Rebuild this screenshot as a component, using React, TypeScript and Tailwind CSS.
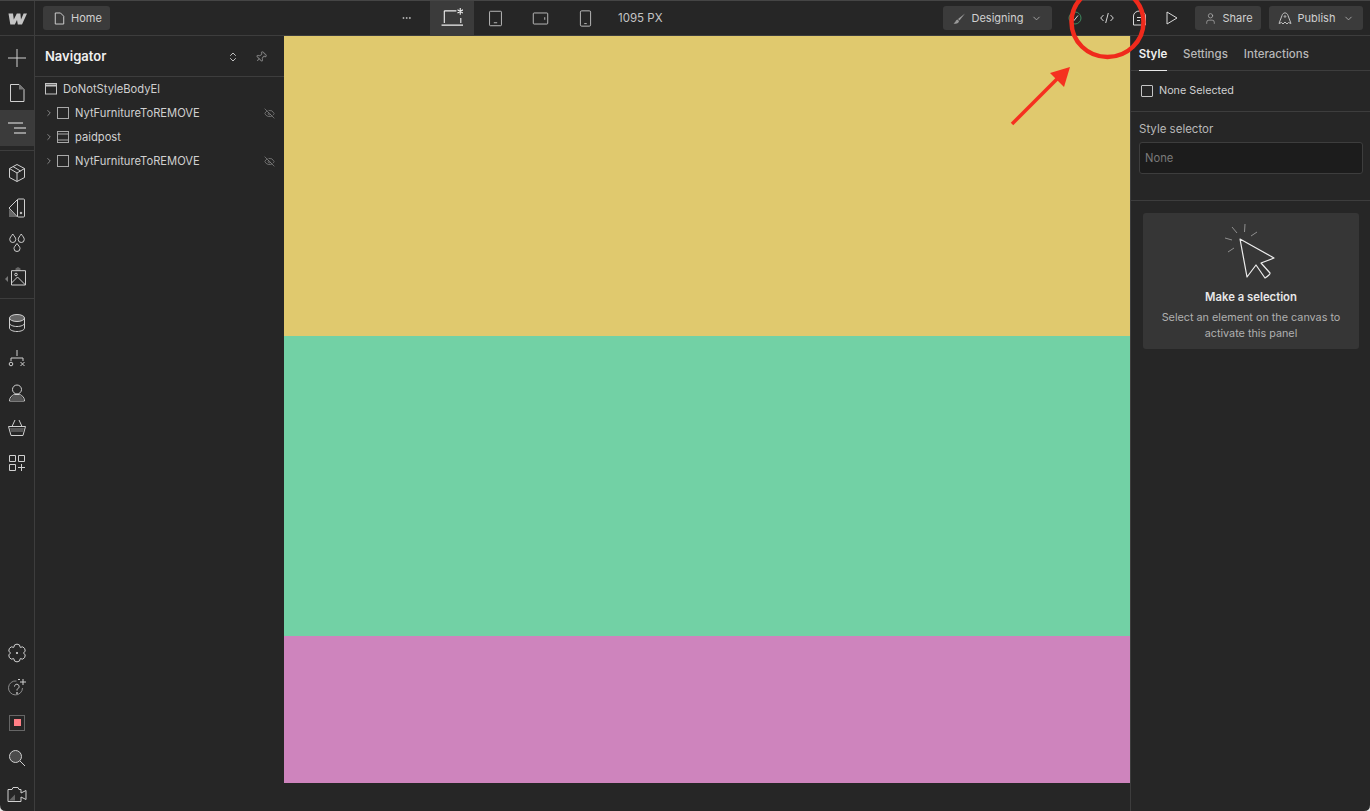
import { ChevronDown, ChevronRight, ChevronsUpDown, Ellipsis, EyeOff, Pin, User } from 'lucide-react'

const stroke = '#d0d0d0'

function Ico({ children, size = 20, className = '' }: { children: React.ReactNode; size?: number; className?: string }) {
  return (
    <svg width={size} height={size} viewBox="0 0 20 20" fill="none" stroke={stroke} strokeWidth={1} strokeLinejoin="round" className={className}>
      {children}
    </svg>
  )
}

function RailBtn({ children, active, h = 35 }: { children: React.ReactNode; active?: boolean; h?: number }) {
  return (
    <div className={`flex w-full items-center justify-center ${active ? 'bg-[#3b3b3b]' : ''}`} style={{ height: h }}>
      {children}
    </div>
  )
}

function Rail() {
  return (
    <div className="flex w-[35px] shrink-0 flex-col border-r border-[#3d3d3d] bg-[#262626]">
      <div className="pt-1">
        <RailBtn h={35}>
          <Ico><path d="M10 1v18M1 10h18" /></Ico>
        </RailBtn>
        <RailBtn h={35}>
          <Ico><path d="M3.500 1.500h8.500l5 5v12h-13.500z" /><path d="M12 1.500l5 5h-5z" fill="#777" stroke="none" /></Ico>
        </RailBtn>
        <RailBtn active h={36}>
          <Ico><path d="M1 5h15M7 10h12M7 15h12" stroke="#f0f0f0" /></Ico>
        </RailBtn>
      </div>
      <div className="mt-1 border-t border-[#3d3d3d] pt-1">
        <RailBtn>
          <Ico><path d="M10 1.500l7.500 4v9l-7.500 4-7.500-4v-9z" /><path d="M2.500 5.500L10 10l7.500-4.500M10 10v8.500M6 3.500l7.500 4.500" /></Ico>
        </RailBtn>
        <RailBtn>
          <Ico><rect x="10.500" y="1" width="7" height="18" rx="1" /><path d="M2 11v8h8z" fill="#666" stroke="none" /><path d="M2 10L10.500 1.500M2 10l8.500 9" /><circle cx="14" cy="15" r="0.800" fill={stroke} /></Ico>
        </RailBtn>
        <RailBtn>
          <Ico><path d="M5.750 1c-1.500 2.500-3 3.500-3 5.500a3 3 0 0 0 6 0c0-2-1.500-3-3-5.500zM14.250 1c-1.500 2.500-3 3.500-3 5.500a3 3 0 0 0 6 0c0-2-1.500-3-3-5.500zM10 10.500c-1.500 2.300-3 3.200-3 5a3 3 0 0 0 6 0c0-1.800-1.500-2.700-3-5z" /></Ico>
        </RailBtn>
        <RailBtn h={34}>
          <div className="relative h-5 w-5">
            <span className="absolute left-[-2px] top-[9px] h-0 w-0 border-y-[3px] border-r-[3px] border-y-transparent border-r-[#777]" />
            <Ico><path d="M8.500 1.500l2.500-1.500 2.500 1.500v2h-5z" fill="#666" stroke="none" /><rect x="4.500" y="3.700" width="14" height="14.300" /><path d="M4.500 16l6-6 8 8" /><circle cx="9" cy="7.500" r="1.300" /></Ico>
          </div>
        </RailBtn>
      </div>
      <div className="mt-1 border-t border-[#3d3d3d] pt-[6px]">
        <RailBtn>
          <Ico><ellipse cx="10" cy="5" rx="7.500" ry="3.500" fill="#666" /><path d="M2.500 5v10c0 2 3.500 3.500 7.500 3.500s7.500-1.500 7.500-3.500V5M2.500 10c0 2 3.500 3.500 7.500 3.500s7.500-1.500 7.500-3.500" /></Ico>
        </RailBtn>
        <RailBtn>
          <Ico><path d="M10 2v6M4 13v-3h12v3" /><circle cx="4" cy="16" r="1.800" /><path d="M13.500 14l4 4M17.500 14l-4 4" /></Ico>
        </RailBtn>
        <RailBtn>
          <Ico><circle cx="10" cy="6.500" r="4.500" /><path d="M2.500 18c0-4 3-6 5-6.500h5c2 .5 5 2.500 5 6.500z" /><path d="M6 12l-3 6h14l-3-6z" fill="#555" stroke="none" /></Ico>
        </RailBtn>
        <RailBtn>
          <Ico><path d="M1.500 8.500h17l-2.500 9H4z" /><path d="M5 8.500L8 2M15 8.500L12 2" /><path d="M3 10h14l-1 4H4z" fill="#555" stroke="none" /></Ico>
        </RailBtn>
        <RailBtn>
          <Ico><rect x="2.500" y="2.500" width="6" height="6" /><rect x="11.500" y="2.500" width="6" height="6" /><rect x="2.500" y="11.500" width="6" height="6" /><path d="M14.500 11v7M11 14.500h7" /></Ico>
        </RailBtn>
      </div>
      <div className="mt-auto flex flex-col">
        <RailBtn>
          <Ico><path d="M6.750 4.370A3.250 3.250 0 0 1 13.250 4.370A3.250 3.250 0 0 1 16.500 10A3.250 3.250 0 0 1 13.250 15.630A3.250 3.250 0 0 1 6.750 15.630A3.250 3.250 0 0 1 3.500 10A3.250 3.250 0 0 1 6.750 4.370z" /><circle cx="10" cy="10" r="0.700" fill={stroke} /></Ico>
        </RailBtn>
        <RailBtn>
          <Ico><path d="M15.500 10a7 7 0 1 1-6-7" stroke="#8a8a8a" /><path d="M16 1v6M13 4h6M11 1.500h2" /><path d="M7.500 8.500a2.300 2.300 0 1 1 3.500 2c-.8.500-1 1-1 2" /><circle cx="10" cy="15" r="0.500" fill={stroke} /></Ico>
        </RailBtn>
        <RailBtn>
          <div className="flex h-[16px] w-[16px] items-center justify-center border border-[#666]">
            <div className="h-[7px] w-[7px] bg-[#ff7f86]" />
          </div>
        </RailBtn>
        <RailBtn>
          <Ico><circle cx="8.500" cy="8.500" r="6" fill="#4b4b4b" /><path d="M13 13l5 5" /></Ico>
        </RailBtn>
        <div className="mt-[3px]">
          <RailBtn h={33}>
            <Ico><path d="M1 4.500h4l1-2h5l1 2h2v3.500l5-2.500v9l-5-2.500v4.500H1z" /><path d="M2 15.500l6-6v6z" fill="#666" stroke="none" /></Ico>
          </RailBtn>
        </div>
      </div>
    </div>
  )
}

function TreeRow({ label, icon, hidden }: { label: string; icon: 'box' | 'section'; hidden?: boolean }) {
  return (
    <div className="flex h-6 items-center pl-[9px] pr-[9px]">
      <ChevronRight size={10} strokeWidth={1.500} className="text-[#bbb]" />
      <span className="ml-[2px] flex h-[14px] w-[14px] items-center justify-center">
        {icon === 'box' ? (
          <span className="h-[12px] w-[12px] border border-[#a8a8a8]" />
        ) : (
          <svg width="12" height="12" viewBox="0 0 12 12" fill="none" stroke="#a8a8a8"><rect x="0.500" y="0.500" width="11" height="11" /><path d="M0.500 3h11M0.500 9h11" /></svg>
        )}
      </span>
      <span className="ml-[5px] text-[11.200px] text-[#d0d0d0]">{label}</span>
      {hidden && <EyeOff size={11} strokeWidth={1.300} className="ml-auto text-[#9a9a9a]" />}
    </div>
  )
}

function Navigator() {
  return (
    <div className="flex w-[249px] shrink-0 flex-col bg-[#262626]">
      <div className="flex h-[41px] items-center border-b border-[#3d3d3d] pl-[10px] pr-[17px] pt-[2px]">
        <span className="text-[13px] font-semibold text-[#f0f0f0]">Navigator</span>
        <ChevronsUpDown size={12} className="ml-auto text-[#c0c0c0]" />
        <Pin size={12} className="ml-[16px] rotate-45 text-[#7a7a7a]" />
      </div>
      <div className="flex h-6 items-center pl-[10px]">
        <svg width="13" height="12" viewBox="0 0 13 12" fill="none" stroke="#c4c4c4"><rect x="0.500" y="0.500" width="11" height="10.500" /><path d="M0.500 2.500h11" strokeWidth="2" /></svg>
        <span className="ml-[5px] text-[11.200px] text-[#d0d0d0]">DoNotStyleBodyEl</span>
      </div>
      <TreeRow label="NytFurnitureToREMOVE" icon="box" hidden />
      <TreeRow label="paidpost" icon="section" />
      <TreeRow label="NytFurnitureToREMOVE" icon="box" hidden />
    </div>
  )
}

function TopBar() {
  return (
    <div className="flex h-[36px] shrink-0 items-center border-b border-t border-b-[#3d3d3d] border-t-[#454545] bg-[#262626] text-[11px] text-[#d0d0d0]">
      <div className="flex h-full w-[35px] shrink-0 items-center justify-center border-r border-[#3d3d3d]">
        <svg width="20" height="13" viewBox="0 0 20 13" fill="#c4c4c4">
          <path d="M1.500 1.500h4.500l.8 6 3-6h3.600l.6 6 2.600-6H20l-5 11h-4.200l-.8-4.500L7.800 12.500H3.300z" />
        </svg>
      </div>
      <div className="ml-2 flex h-[24px] w-[67px] items-center rounded-[3px] bg-[#3b3b3b] pl-[10px]">
        <Ico size={13}><path d="M3.500 1.500h8l5 5v12h-13z" strokeWidth={1.500} /></Ico>
        <span className="ml-[5px]">Home</span>
      </div>
      <div className="ml-[291px] flex h-[34px] w-[11px] items-center justify-center">
        <Ellipsis size={12} className="text-[#c4c4c4]" />
      </div>
      <div className="ml-[18px] flex h-[34px] w-[44px] items-center justify-center bg-[#3b3b3b]">
        <Ico size={22}><path d="M3 3.500h11M3 3.500v11M18 10v4.500M0.500 16.500h21" stroke="#f0f0f0" /><path d="M17.500 1v6M15 2.500l5 3M20 2.500l-5 3" stroke="#f0f0f0" /></Ico>
      </div>
      <div className="flex h-[34px] w-[42px] items-center justify-center">
        <Ico size={17}><rect x="3" y="1.500" width="14" height="17" rx="1" /><path d="M8 15h4" /></Ico>
      </div>
      <div className="ml-[2px] flex h-[34px] w-[44px] items-center justify-center">
        <Ico size={17}><rect x="1.500" y="3.500" width="17" height="13" rx="1" /><path d="M15 8.500v3" /></Ico>
      </div>
      <div className="ml-[1px] flex h-[34px] w-[44px] items-center justify-center">
        <Ico size={17}><rect x="4" y="1" width="12" height="18" rx="1.500" /><path d="M8.500 16h3" /></Ico>
      </div>
      <span className="ml-[11px] pt-[1px] text-[11.500px] text-[#c4c4c4]">1095 PX</span>
      <div className="ml-[281px] flex h-[24px] w-[109px] items-center rounded-[3px] bg-[#3b3b3b] pl-[10px]">
        <svg width="13" height="13" viewBox="0 0 13 13" fill="#999"><path d="M12 1.500L5 7 6.500 8.500zM4.500 7.500C2.500 8 3 10 .5 11.500c3 1 5.500-.5 5.500-2.500z" /></svg>
        <span className="ml-[5px]">Designing</span>
        <ChevronDown size={11} className="ml-[8px] text-[#aaa]" />
      </div>
      <div className="ml-[15px] flex w-[15px] items-center justify-center">
        <svg width="14" height="14" viewBox="0 0 14 14" fill="none"><circle cx="7" cy="7" r="6" stroke="#3d8a5f" /><path d="M4 7.500l2 2 4-5" stroke="#d8d8d8" /></svg>
      </div>
      <div className="ml-[17px] flex w-[16px] items-center justify-center">
        <svg width="14" height="12" viewBox="0 0 14 12" fill="none" stroke="#d8d8d8"><path d="M3.500 3L.7 6l2.800 3M10.500 3l2.800 3-2.800 3M8.300 1L5.700 11" /></svg>
      </div>
      <div className="ml-[17px] flex w-[15px] items-center justify-center">
        <svg width="15" height="16" viewBox="0 0 15 16" fill="none" stroke="#d8d8d8"><path d="M1.500 15V6a6 5 0 0 1 12 0v9zM5 7.500h5M5 10.500h3" /></svg>
      </div>
      <div className="ml-[18px] flex w-[14px] items-center justify-center">
        <svg width="12" height="14" viewBox="0 0 12 14" fill="none" stroke="#d8d8d8"><path d="M1 1l10 6-10 6z" /></svg>
      </div>
      <div className="ml-[16px] flex h-[24px] w-[66px] items-center rounded-[3px] bg-[#3b3b3b] pl-[9px]">
        <User size={13} strokeWidth={1.200} className="text-[#c0c0c0]" />
        <span className="ml-[5px]">Share</span>
      </div>
      <div className="ml-[8px] flex h-[24px] w-[94px] items-center rounded-[3px] bg-[#3b3b3b] pl-[9px]">
        <svg width="14" height="14" viewBox="0 0 14 14" fill="none" stroke="#c0c0c0"><path d="M1 12.500L4 4.500c1-3.500 5-3.500 6 0l3 8-2.500-1-1.500 1.500L7 11l-2 2-1.500-1.500z" /><circle cx="7" cy="5.500" r="0.800" /></svg>
        <span className="ml-[5px]">Publish</span>
        <ChevronDown size={11} className="ml-[8px] text-[#aaa]" />
      </div>
    </div>
  )
}

function StylePanel() {
  return (
    <div className="flex w-[240px] shrink-0 flex-col border-l border-[#3d3d3d] bg-[#262626]">
      <div className="flex h-[35px] border-b border-[#3d3d3d] pl-[8px] text-[11.500px] font-medium text-[#b8b8b8]">
        <div className="flex h-[35px] w-[28px] items-center justify-center border-b border-[#e8e8e8] pt-[4px] font-semibold text-[#f0f0f0]">Style</div>
        <div className="ml-[16px] flex items-center pt-[4px]">Settings</div>
        <div className="ml-[16px] flex items-center pt-[4px]">Interactions</div>
      </div>
      <div className="flex h-[41px] items-center border-b border-[#3d3d3d] pl-[10px]">
        <span className="h-[12px] w-[12px] rounded-[1px] border border-[#c4c4c4]" />
        <span className="ml-[6px] text-[10.800px] text-[#d0d0d0]">None Selected</span>
      </div>
      <div className="h-[89px] border-b border-[#3d3d3d] px-[8px] pt-[10px]">
        <div className="text-[11.500px] leading-[15px] text-[#b8b8b8]">Style selector</div>
        <div className="mt-[5px] flex h-[32px] w-[224px] items-center rounded-[3px] border border-[#3d3d3d] bg-[#1c1c1c] px-[5px] text-[11.200px] text-[#7a7a7a]">
          None
        </div>
      </div>
      <div className="mx-[12px] mt-[12px] flex h-[136px] w-[216px] flex-col items-center rounded-[3px] bg-[#363636] pt-[10px]">
        <svg width="54" height="58" viewBox="0 0 54 58" fill="none">
          <path d="M8 4l5 6M21 1l-.5 8M33 9l-6 4M1 15l7 2M4 29l6-4" stroke="#8f8f8f" />
          <path d="M16 16L50 35L37 40L46 50Q46.500 51.500 41 55L32 42L23 54Z" stroke="#ededed" strokeLinejoin="round" strokeWidth="1.200" />
        </svg>
        <div className="mt-[9px] text-[11.300px] font-semibold leading-[15px] text-[#e8e8e8]">Make a selection</div>
        <div className="mt-[5px] text-center text-[10.800px] leading-[16px] text-[#b0b0b0]">
          Select an element on the canvas to
          <br />
          activate this panel
        </div>
      </div>
    </div>
  )
}

export default function App() {
  return (
    <div className="relative flex h-[811px] w-[1370px] flex-col overflow-hidden bg-[#262626] font-['Inter',sans-serif]">
      <TopBar />
      <div className="flex min-h-0 flex-1">
        <Rail />
        <Navigator />
        <div className="flex min-w-0 flex-1 flex-col">
          <div className="h-[300px] bg-[#e0c96e]" />
          <div className="h-[300px] bg-[#72d1a5]" />
          <div className="h-[147px] bg-[#ce84bd]" />
        </div>
        <StylePanel />
      </div>
      {/* annotation over the screenshot, plus the window's rounded bottom corners */}
      <svg className="pointer-events-none absolute left-0 top-0" width="1370" height="811" fill="none">
        <ellipse cx="1107.500" cy="22" rx="36" ry="35" stroke="#f02a1c" strokeWidth="4.500" />
        <path d="M1012 124l47-47" stroke="#f5301f" strokeWidth="3.500" />
        <path d="M1070 67l-20 6 14 14z" fill="#f5301f" />
        <path d="M0 805v6h6q-6 0-6-6z" fill="#e8e8e8" />
        <path d="M1370 805v6h-6q6 0 6-6z" fill="#e8e8e8" />
      </svg>
    </div>
  )
}
